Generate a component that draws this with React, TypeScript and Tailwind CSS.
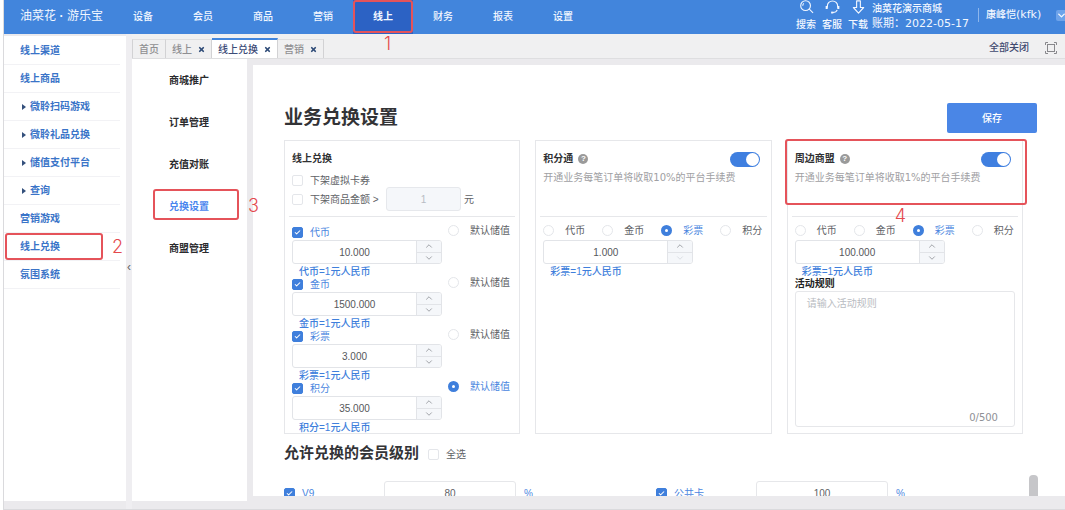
import { useState } from "react";
import type { ReactNode } from "react";
import { Check, ChevronDown, ChevronUp, X } from "lucide-react";

const TOP_NAV = ["设备", "会员", "商品", "营销", "线上", "财务", "报表", "设置"];

const SIDE_NAV = [
  { label: "线上渠道" },
  { label: "线上商品" },
  { label: "微聆扫码游戏", nested: true },
  { label: "微聆礼品兑换", nested: true },
  { label: "储值支付平台", nested: true },
  { label: "查询", nested: true },
  { label: "营销游戏" },
  { label: "线上兑换", step: "2" },
  { label: "氛围系统" },
];

const TABS = [
  { label: "首页", closable: false },
  { label: "线上", closable: true },
  { label: "线上兑换", closable: true, active: true },
  { label: "营销", closable: true },
];

const SUB_NAV = ["商城推广", "订单管理", "充值对账", "兑换设置", "商盟管理"];

const CURRENCIES = [
  { name: "代币", value: "10.000" },
  { name: "金币", value: "1500.000" },
  { name: "彩票", value: "3.000" },
  { name: "积分", value: "35.000" },
];

const LEVELS = [
  { name: "V9", value: "80" },
  { name: "公共卡", value: "100" },
];

function StepNumber({ children, className }: { children: ReactNode; className: string }) {
  return (
    <span className={`pointer-events-none absolute z-10 font-['Inter'] text-[18px] leading-[18px] font-light text-[#e4494d] ${className}`}>
      {children}
    </span>
  );
}

function Outline({ className }: { className: string }) {
  return <span className={`pointer-events-none absolute rounded-[3px] border-2 border-[#e5535a] ${className}`} />;
}

function Tick({ label, defaultChecked = false, className = "" }: { label: string; defaultChecked?: boolean; className?: string }) {
  return (
    <label className={`flex items-center gap-[7px] text-[#606266] has-checked:text-[#4a86e0] ${className}`}>
      <span className="relative flex size-[11px] shrink-0">
        <input
          type="checkbox"
          defaultChecked={defaultChecked}
          className="peer size-[11px] appearance-none rounded-[2px] border border-[#e4e6ea] bg-white checked:border-[#3f7fdc] checked:bg-[#3f7fdc]"
        />
        <Check className="pointer-events-none absolute top-[2px] left-[2px] hidden size-[7px] text-white peer-checked:block" strokeWidth={3.5} />
      </span>
      {label}
    </label>
  );
}

function Choice({ group, label, defaultChecked = false, className }: { group: string; label: string; defaultChecked?: boolean; className: string }) {
  return (
    <label className={`flex items-center text-[#606266] has-checked:text-[#4a86e0] ${className}`}>
      <input
        type="radio"
        name={group}
        defaultChecked={defaultChecked}
        className="size-[11px] shrink-0 appearance-none rounded-full border border-[#e4e6ea] bg-white checked:border-4 checked:border-[#3f7fdc]"
      />
      {label}
    </label>
  );
}

function NumberField({ label, initial, atMin = false }: { label: string; initial: string; atMin?: boolean }) {
  const [value, setValue] = useState(initial);
  const step = (by: number) => setValue((v) => Math.max(0, Number(v) + by).toFixed(3));
  return (
    <div className="flex h-6 w-[150px] overflow-hidden rounded-[3px] border border-[#e2e4e8] bg-white">
      <input
        type="text"
        aria-label={label}
        value={value}
        onChange={(e) => setValue(e.target.value)}
        className="min-w-0 flex-1 text-center text-[#55575b] outline-none"
      />
      <div className="flex w-[25px] flex-col border-l border-[#e2e4e8] bg-[#f5f7fa] text-[#909399]">
        <button type="button" aria-label="增加" onClick={() => step(1)} className="flex flex-1 items-center justify-center border-b border-[#e2e4e8]">
          <ChevronUp className="size-[10px]" strokeWidth={2} />
        </button>
        <button
          type="button"
          aria-label="减少"
          disabled={atMin}
          onClick={() => step(-1)}
          className="flex flex-1 items-center justify-center disabled:text-[#d5d8de]"
        >
          <ChevronDown className="size-[10px]" strokeWidth={2} />
        </button>
      </div>
    </div>
  );
}

function Rate({ name }: { name: string }) {
  return <p className="h-[14px] pl-[7px] leading-[16px] font-medium text-[#3f7fdc]">{name}=1元人民币</p>;
}

function Card({ head, children }: { head: ReactNode; children: ReactNode }) {
  return (
    <section className="relative flex h-[294px] flex-col border border-[#e6e7ea] px-1">
      <div className="min-h-[76px] border-b border-[#e6e7ea] px-[3px] pt-[10px]">{head}</div>
      <div className="flex flex-1 flex-col px-[3px] pt-[9px]">{children}</div>
    </section>
  );
}

function ServiceHead({ title, fee }: { title: string; fee: string }) {
  return (
    <>
      <div className="flex items-center justify-between pr-1">
        <h3 className="flex items-center gap-[5px] leading-[16px] font-bold text-[#303133]">
          {title}
          <span className="flex size-[10px] items-center justify-center rounded-full bg-[#9a9a9a] text-[8px] leading-none text-white">?</span>
        </h3>
        <input
          type="checkbox"
          role="switch"
          aria-label={title}
          defaultChecked
          className="h-[15px] w-[30px] appearance-none rounded-full bg-[#c9ccd2] p-px before:block before:size-[13px] before:rounded-full before:bg-white checked:bg-[#3f7fe0] checked:before:ml-[15px]"
        />
      </div>
      <p className="mt-[3px] leading-[16px] whitespace-nowrap text-[#a0a0a3]">
        开通业务每笔订单将收取<span className="font-['DejaVu_Sans']">{fee}</span>的平台手续费
      </p>
    </>
  );
}

function PointChoices({ group }: { group: string }) {
  return (
    <div className="flex h-2 items-center">
      {CURRENCIES.map((c) => (
        <Choice key={c.name} group={group} label={c.name} defaultChecked={c.name === "彩票"} className="w-[59px] shrink-0 gap-[11px] last:w-auto" />
      ))}
    </div>
  );
}

function HeaderTool({ label, children }: { label: string; children: ReactNode }) {
  return (
    <button type="button" className="flex w-[26px] flex-col items-center">
      <svg viewBox="0 0 16 16" className="size-[15px]" fill="none" stroke="currentColor" strokeWidth="1.2">
        {children}
      </svg>
      <span className="mt-[3px] leading-[14px] font-medium">{label}</span>
    </button>
  );
}

function Header() {
  return (
    <header className="flex h-[34px] shrink-0 bg-[#4285dc] text-[#f2f7ff]">
      <div className="flex w-[109px] shrink-0 items-center pb-[2px] pl-4 text-[12px]">
        <span>油菜花</span>
        <span className="w-[11px] text-center font-bold">·</span>
        <span>游乐宝</span>
      </div>
      <nav className="flex">
        {TOP_NAV.map((item) => (
          <a
            key={item}
            href="#"
            className={`relative flex w-[60px] items-center justify-center pb-[2px] ${item === "线上" ? "bg-[#2c62c4] font-bold" : "font-medium"}`}
          >
            {item}
            {item === "线上" && (
              <>
                <Outline className="inset-x-0 top-0 bottom-px" />
                <StepNumber className="top-[35px] left-[31px]">1</StepNumber>
              </>
            )}
          </a>
        ))}
      </nav>
      <div className="ml-auto flex shrink-0 items-start">
        <HeaderTool label="搜索">
          <circle cx="7" cy="6" r="5.2" />
          <path d="M5.2 3.6A3 3 0 0 0 4 6M11 9.8l4 4" />
        </HeaderTool>
        <HeaderTool label="客服">
          <path d="M2.5 8V6.5a5.5 5.5 0 0 1 11 0V8" />
          <path d="M1.8 6.5v3.200M14.2 6.5v3.2" strokeWidth="2.2" />
          <path d="M13 10.5c-.6 1.8-2 2.8-4.6 2.9" />
          <path d="M6.5 13.4h2.4" strokeWidth="2" />
        </HeaderTool>
        <HeaderTool label="下载">
          <path d="M6 1v7H2.5L8 14l5.500-6H10V1z" strokeLinejoin="round" />
        </HeaderTool>
        <div className="ml-px w-[106px] pt-px text-[11px] leading-[15px] whitespace-nowrap">
          <p className="text-[10px] font-medium">油菜花演示商城</p>
          <p>
            账期：<span className="font-['DejaVu_Sans']">2022-05-17</span>
          </p>
        </div>
        <div className="mt-2 flex items-center border-l border-[#8db6ec] pl-[7px] leading-[14px]">
          <span className="w-[70px] font-medium whitespace-nowrap">
            康峰恺<span className="font-['DejaVu_Sans'] text-[11px]">(kfk)</span>
          </span>
          <button type="button" aria-label="账户菜单" className="flex h-[11px] w-[9px] justify-start overflow-hidden rounded-l-[2px] bg-[#6ea3ea]">
            <ChevronDown className="size-[11px] shrink-0" strokeWidth={3} />
          </button>
        </div>
      </div>
    </header>
  );
}

function Sidebar() {
  return (
    <aside className="mt-[2px] mb-2 w-[122px] shrink-0 bg-white pt-px pr-[6px]">
      <ul>
        {SIDE_NAV.map((item) => (
          <li key={item.label} className="relative border-b border-[#f2f2f5]">
            <a href="#" className="flex h-[27px] items-center pl-4 font-bold whitespace-nowrap text-[#3a74c8]">
              {item.nested && (
                <span className="w-[10px]">
                  <span className="ml-[2px] block size-0 border-y-[3px] border-l-4 border-y-transparent border-l-[#34507c]" />
                </span>
              )}
              {item.label}
            </a>
            {item.step && (
              <>
                <Outline className="top-0 right-[17px] bottom-0 left-px" />
                <StepNumber className="top-[5px] left-[108px]">{item.step}</StepNumber>
              </>
            )}
          </li>
        ))}
      </ul>
    </aside>
  );
}

function TabBar() {
  return (
    <div className="flex h-[25px] shrink-0 items-end border-b border-[#dedee0] bg-[#f0f0f1]">
      {TABS.map((tab) => (
        <div
          key={tab.label}
          className={`flex items-center gap-[6px] border-r border-[#d2d2d4] px-[6px] pt-px first:border-l ${
            tab.active ? "h-5 border-t-2 border-t-[#4285dc] bg-white text-[#3d4c78]" : "h-[19px] border-t border-t-[#dedee0] text-[#8f8f92]"
          }`}
        >
          <a href="#" className="font-medium whitespace-nowrap">{tab.label}</a>
          {tab.closable && (
            <button type="button" aria-label={`关闭${tab.label}`} className="text-[#2f4c78]">
              <X className="size-[7px]" strokeWidth={6} />
            </button>
          )}
        </div>
      ))}
      <div className="ml-auto flex h-full items-center gap-4 pt-[3px] pr-2">
        <button type="button" className="font-medium text-[#414a70]">全部关闭</button>
        <button type="button" aria-label="全屏" className="text-[#88888c]">
          <svg viewBox="0 0 12 12" className="size-3" fill="none" stroke="currentColor" strokeWidth="1">
            <rect x="2.500" y="2.500" width="7" height="7" />
            <path d="M.5 3V.5H3M9 .5h2.500V3M11.500 9v2.500H9M3 11.500H.5V9" />
          </svg>
        </button>
      </div>
    </div>
  );
}

function SubNav() {
  return (
    <nav className="mb-2 w-[115px] shrink-0 bg-white">
      {SUB_NAV.map((item) => {
        const current = item === "兑换设置";
        return (
          <a
            key={item}
            href="#"
            className={`relative flex h-[42px] items-center pl-[37px] font-bold whitespace-nowrap ${current ? "text-[#4a86ee]" : "text-[#2b2b2e]"}`}
          >
            {item}
            {current && (
              <>
                <Outline className="top-1 right-[8px] bottom-[7px] left-[21px]" />
                <StepNumber className="top-3 left-[116px]">3</StepNumber>
              </>
            )}
          </a>
        );
      })}
    </nav>
  );
}

function OnlineExchangeCard() {
  return (
    <Card
      head={
        <>
          <h3 className="leading-[16px] font-bold text-[#303133]">线上兑换</h3>
          <Tick label="下架虚拟卡券" className="mt-[7px] h-[13px]" />
          <div className="flex h-6 items-center">
            <Tick label="下架商品金额 >" className="w-[94px] whitespace-nowrap" />
            <input
              type="text"
              aria-label="下架商品金额"
              disabled
              value="1"
              className="h-6 w-[75px] rounded-[3px] border border-[#e6e8ec] bg-[#f5f7fa] text-center text-[#b8bcc4]"
            />
            <span className="ml-[3px] text-[#606266]">元</span>
          </div>
        </>
      }
    >
      {CURRENCIES.map((c) => (
        <div key={c.name} className="flex items-start">
          <div className="w-[156px] shrink-0">
            <Tick label={c.name} defaultChecked className="h-3" />
            <div className="mt-[2px]">
              <NumberField label={c.name} initial={c.value} />
            </div>
            <Rate name={c.name} />
          </div>
          <Choice group="default-store" label="默认储值" defaultChecked={c.name === "积分"} className="h-2 gap-[11px] whitespace-nowrap" />
        </div>
      ))}
    </Card>
  );
}

function AllianceRules() {
  const [rules, setRules] = useState("");
  return (
    <>
      <label htmlFor="rules" className="leading-[12px] font-bold text-[#222]">活动规则</label>
      <div className="mt-px flex h-[136px] flex-col rounded-[3px] border border-[#e6e7ea]">
        <textarea
          id="rules"
          maxLength={500}
          value={rules}
          onChange={(e) => setRules(e.target.value)}
          placeholder="请输入活动规则"
          className="block w-full flex-1 resize-none px-[11px] py-1 leading-[16px] text-[#606266] outline-none placeholder:text-[#b9bcc2]"
        />
        <p className="pr-4 text-right font-['DejaVu_Sans'] leading-[16px] text-[#8f9196]">{rules.length}/500</p>
      </div>
    </>
  );
}

function Settings() {
  return (
    <main className="relative mt-[6px] mb-[13px] ml-[6px] min-w-0 flex-1 overflow-hidden bg-white pt-[38px] pr-7 pl-[31px]">
      <div className="flex h-[30px] items-center justify-between">
        <h1 className="text-[19px] font-bold text-[#333336]">业务兑换设置</h1>
        <button type="button" className="h-[30px] w-[90px] rounded-[2px] bg-[#4a86e6] font-medium text-white">保存</button>
      </div>
      <div className="mt-[7px] grid grid-cols-3 gap-[15px] pr-[14px]">
        <OnlineExchangeCard />
        <Card head={<ServiceHead title="积分通" fee="10%" />}>
          <PointChoices group="points" />
          <div className="mt-[6px]">
            <NumberField label="积分通兑换比例" initial="1.000" atMin />
          </div>
          <Rate name="彩票" />
        </Card>
        <Card head={<ServiceHead title="周边商盟" fee="1%" />}>
          <Outline className="-top-[2px] -right-[5px] -left-[3px] h-[66px]" />
          <StepNumber className="top-[66px] left-[107px]">4</StepNumber>
          <PointChoices group="alliance" />
          <div className="mt-[6px]">
            <NumberField label="周边商盟兑换比例" initial="100.000" />
          </div>
          <Rate name="彩票" />
          <AllianceRules />
        </Card>
      </div>
      <div className="mt-[7px] flex h-6 items-center gap-[9px]">
        <h2 className="text-[15px] font-bold text-[#333336]">允许兑换的会员级别</h2>
        <Tick label="全选" className="pt-[2px]" />
      </div>
      <div className="mt-4 grid grid-cols-2 pr-[9px]">
        {LEVELS.map((level) => (
          <div key={level.name} className="flex h-6 items-center text-[#4a86e0]">
            <Tick label={level.name} defaultChecked className="w-[100px]" />
            <input
              type="text"
              aria-label={level.name}
              defaultValue={level.value}
              className="h-6 w-[132px] rounded-[3px] border border-[#e6e7ea] text-center text-[#606266]"
            />
            <span className="ml-2">%</span>
          </div>
        ))}
      </div>
      <span className="absolute right-[27px] bottom-0 h-[21px] w-[9px] rounded-t-[4px] bg-[#c6c6c9]" />
    </main>
  );
}

export default function App() {
  return (
    <div className="h-screen overflow-hidden bg-white pl-[3px] font-['Liberation_Sans','Noto_Sans_CJK_SC',sans-serif] text-[10px]">
      <div className="flex h-full flex-col border-b border-l border-[#dadadd] bg-[#ebeaed]">
        <Header />
        <div className="flex min-h-0 flex-1">
          <Sidebar />
          <div className="relative flex w-[6px] shrink-0 bg-[#efeef1]">
            <button type="button" aria-label="收起菜单" className="absolute top-[226px] left-px text-[12px] leading-[14px] text-[#666]">‹</button>
          </div>
          <div className="flex min-w-0 flex-1 flex-col">
            <TabBar />
            <div className="flex min-h-0 flex-1">
              <SubNav />
              <Settings />
            </div>
          </div>
        </div>
      </div>
    </div>
  );
}
